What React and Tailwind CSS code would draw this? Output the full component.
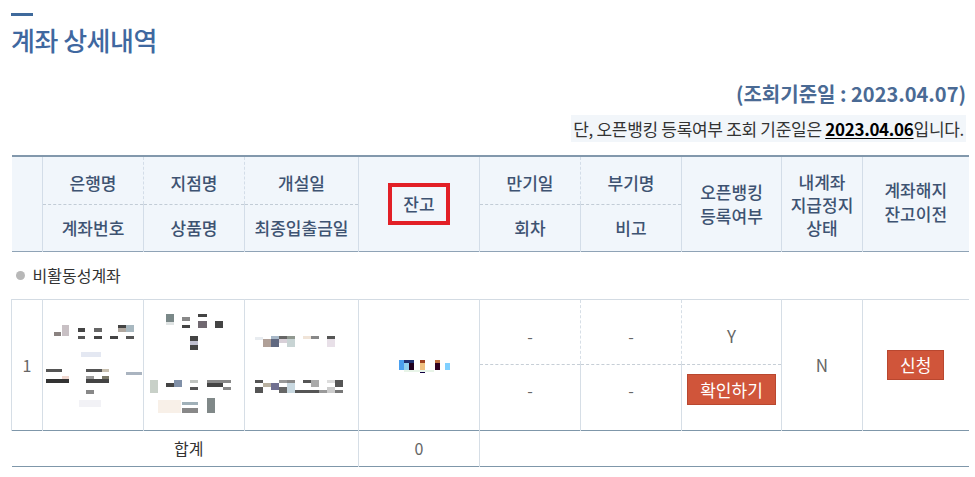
import React from 'react';

const font = { fontFamily: "'Noto Sans CJK KR', 'Noto Sans', sans-serif" };

// pixelated (masked) cell contents, page coordinates
const masks = {
  bank: [
    [53, 332, 7, 4, '#8a8280'], [61, 325, 7, 11, '#c8c0c4'],
    [77, 328, 7, 4, '#444'], [77, 336, 7, 3, '#555'],
    [93, 328, 8, 4, '#666'], [93, 336, 8, 3, '#444'],
    [109, 336, 8, 3, '#444'],
    [117, 325, 8, 3, '#444'], [117, 328, 8, 4, '#b0a8a0'], [125, 325, 8, 7, '#a8b8c0'], [125, 336, 8, 3, '#555'],
    [80, 352, 20, 5, '#e4e8f2'],
    [45, 369, 16, 3, '#555'], [45, 379, 23, 4, '#333'], [61, 376, 7, 3, '#f0d8d0'],
    [85, 369, 16, 3, '#555'], [101, 369, 7, 3, '#c8c0b0'], [85, 379, 23, 4, '#444'], [85, 376, 8, 3, '#999'], [101, 376, 7, 3, '#7a7868'],
    [125, 372, 16, 3, '#aab4c0'],
    [85, 390, 8, 4, '#888'], [78, 400, 22, 7, '#f2f2f6'],
  ],
  branch: [
    [165, 314, 8, 8, '#7a8888'], [165, 322, 8, 3, '#e0e4e4'],
    [181, 317, 8, 4, '#888'], [181, 325, 8, 3, '#444'],
    [197, 314, 9, 3, '#444'], [197, 321, 9, 7, '#706870'],
    [214, 321, 8, 7, '#444'],
    [189, 336, 8, 5, '#444'], [189, 341, 8, 4, '#c0c0d0'], [189, 345, 8, 5, '#444'],
    [149, 380, 8, 13, '#c8d0c8'],
    [165, 383, 8, 4, '#444'], [173, 380, 8, 7, '#8090a8'],
    [189, 380, 8, 3, '#c0c4c0'], [189, 387, 8, 3, '#555'],
    [206, 380, 24, 3, '#888'], [206, 383, 16, 4, '#444'], [222, 387, 8, 3, '#888'],
    [157, 400, 23, 13, '#f8f0e8'],
    [181, 402, 16, 3, '#a0b0b8'], [181, 408, 16, 5, '#888'],
    [206, 398, 8, 15, '#808888'],
  ],
  dates: [
    [254, 337, 8, 3, '#e8ecf0'], [262, 339, 8, 8, '#b0a098'], [270, 336, 8, 3, '#a8b8c8'], [270, 339, 8, 8, '#606880'],
    [278, 336, 8, 3, '#666'], [278, 339, 8, 4, '#d8d0d8'], [286, 336, 8, 3, '#909890'], [286, 339, 8, 8, '#c8d4d4'],
    [302, 336, 8, 3, '#f0e4d8'], [310, 336, 8, 3, '#888'], [326, 336, 8, 3, '#555'], [326, 339, 8, 8, '#e8e0e8'],
    [254, 380, 8, 3, '#555'], [254, 387, 8, 6, '#555'], [262, 383, 8, 4, '#b8b0a0'], [270, 383, 8, 7, '#707090'],
    [278, 380, 8, 3, '#999'], [278, 387, 8, 6, '#666'], [286, 380, 8, 3, '#888'], [286, 383, 8, 10, '#c8d8e0'],
    [294, 390, 24, 3, '#555'], [302, 380, 8, 3, '#555'], [310, 380, 8, 7, '#aaa'], [318, 390, 8, 3, '#999'],
    [326, 380, 8, 3, '#ddd'], [326, 387, 8, 6, '#ccc'], [334, 380, 8, 7, '#555'], [334, 390, 8, 3, '#777'],
  ],
  balance: [
    [398, 360, 5, 10, '#4aa0f0'], [403, 360, 10, 3, '#203070'], [403, 363, 5, 7, '#90d0f0'], [408, 363, 5, 7, '#200020'],
    [419, 360, 5, 3, '#a04020'], [419, 363, 5, 7, '#f0c080'], [419, 370, 5, 3, '#100040'],
    [434, 360, 5, 3, '#c07040'], [434, 363, 5, 7, '#300020'], [444, 363, 5, 7, '#80d0ff'],
    [403, 370, 30, 2, '#e8f4e8'],
  ],
};

function Mask({ items, x0, w }) {
  return (
    <svg width={w} height={130} viewBox={`${x0} 300 ${w} 130`} className="block">
      {items.map(([x, y, rw, rh, c], i) => (
        <rect key={i} x={x} y={y} width={rw} height={rh} fill={c} />
      ))}
    </svg>
  );
}

const th = 'border-x border-[#d3dde8] font-medium text-[17px] text-[#3e5372] text-center align-middle';
const td = 'border-x border-[#d6dee6] text-center align-middle text-[16px] text-[#666] p-0';
const btn = 'inline-block bg-[#d0553a] border border-[#b9472f] text-white text-[17px]';

export default function App() {
  return (
    <div className="w-[975px] h-[477px] bg-white pl-[11px] pr-[7px] pt-[13px]" style={font}>
      <div className="w-[22px] h-[3px] bg-[#3f6a9c]" />
      <h1 className="mt-[8px] text-[26px] leading-[32px] font-medium text-[#3f68a0] tracking-[-0.5px]">계좌 상세내역</h1>

      <div className="flex flex-col items-end mt-[25px] pr-[2px]">
        <p className="text-[20px] leading-[26px] font-bold text-[#4a6a94]">(조회기준일 : 2023.04.07)</p>
        <p className="mt-[8px] bg-[#f2f6fa] px-[2px] text-[17px] leading-[27px] text-[#333] tracking-[-0.3px]">
          단, 오픈뱅킹 등록여부 조회 기준일은{' '}
          <span className="font-bold text-black underline underline-offset-2">2023.04.06</span>입니다.
        </p>
      </div>

      <table className="mt-[13px] w-[957px] table-fixed border-collapse">
        <colgroup>
          <col className="w-[31px]" />
          <col className="w-[101px]" />
          <col className="w-[101px]" />
          <col className="w-[114px]" />
          <col className="w-[121px]" />
          <col className="w-[101px]" />
          <col className="w-[101px]" />
          <col className="w-[100px]" />
          <col className="w-[81px]" />
          <col className="w-[106px]" />
        </colgroup>
        <thead className="bg-[#f1f6fb]">
          <tr className="h-[48px] border-t-2 border-[#8298ac]">
            <th rowSpan={2} className="border-r border-[#d3dde8]" />
            <th className={`${th} border-b border-dashed border-b-[#c2ccd6] pt-[4px]`}>은행명</th>
            <th className={`${th} border-b border-dashed border-b-[#c2ccd6] pt-[4px]`}>지점명</th>
            <th className={`${th} border-b border-dashed border-b-[#c2ccd6] pt-[4px]`}>개설일</th>
            <th rowSpan={2} className={th}>
              <span className="inline-block border-4 border-[#e21f26] w-[62px] h-[42px] leading-[34px] pb-[2px]">잔고</span>
            </th>
            <th className={`${th} border-b border-dashed border-b-[#c2ccd6] pt-[4px]`}>만기일</th>
            <th className={`${th} border-b border-dashed border-b-[#c2ccd6] pt-[4px]`}>부기명</th>
            <th rowSpan={2} className={`${th} leading-[24px]`}>오픈뱅킹<br />등록여부</th>
            <th rowSpan={2} className={`${th} leading-[23px] pt-[2px]`}>내계좌<br />지급정지<br />상태</th>
            <th rowSpan={2} className={`${th} leading-[24px] border-r-0 pb-[4px]`}>계좌해지<br />잔고이전</th>
          </tr>
          <tr className="h-[47px] border-b border-[#8fa3b6]">
            <th className={th}>계좌번호</th>
            <th className={th}>상품명</th>
            <th className={th}>최종입출금일</th>
            <th className={th}>회차</th>
            <th className={th}>비고</th>
          </tr>
        </thead>
        <tbody>
          <tr className="h-[48px]">
            <td colSpan={10} className="text-left text-[16px] leading-[20px] text-[#333] pl-[4px] pb-[2px]">
              <span className="inline-flex items-center gap-[8px]">
                <span className="inline-block w-[9px] h-[9px] rounded-full bg-[#b8b8b8]" />
                비활동성계좌
              </span>
            </td>
          </tr>
          <tr className="h-[65px] border-t border-[#d3dbe3]">
            <td rowSpan={2} className={td}>1</td>
            <td rowSpan={2} className={td}><Mask items={masks.bank} x0={42} w={101} /></td>
            <td rowSpan={2} className={td}><Mask items={masks.branch} x0={143} w={101} /></td>
            <td rowSpan={2} className={td}><Mask items={masks.dates} x0={244} w={114} /></td>
            <td rowSpan={2} className={td}><Mask items={masks.balance} x0={358} w={121} /></td>
            <td className={`${td} border-b border-dashed border-b-[#c6ced6] pt-[8px]`}>-</td>
            <td className={`${td} border-b border-dashed border-b-[#c6ced6] pt-[8px]`}>-</td>
            <td className={`${td} border-b border-dashed border-b-[#c6ced6] pt-[8px] text-[17px]`}>Y</td>
            <td rowSpan={2} className={`${td} text-[17px]`}>N</td>
            <td rowSpan={2} className={`${td} border-r-0`}>
              <span className={`${btn} leading-[28px] w-[57px]`}>신청</span>
            </td>
          </tr>
          <tr className="h-[65px] border-b border-[#7f97aa]">
            <td className={`${td} pb-[14px]`}>-</td>
            <td className={`${td} pb-[14px]`}>-</td>
            <td className={`${td} align-top pt-[9px]`}>
              <span className={`${btn} leading-[29px] w-[89px]`}>확인하기</span>
            </td>
          </tr>
          <tr className="h-[36px] border-b border-[#7f97aa]">
            <td colSpan={4} className="text-center text-[16px] text-[#333] pl-[8px]">합계</td>
            <td className={td}>0</td>
            <td colSpan={5} className="border-l border-[#d6dee6]" />
          </tr>
        </tbody>
      </table>
    </div>
  );
}
